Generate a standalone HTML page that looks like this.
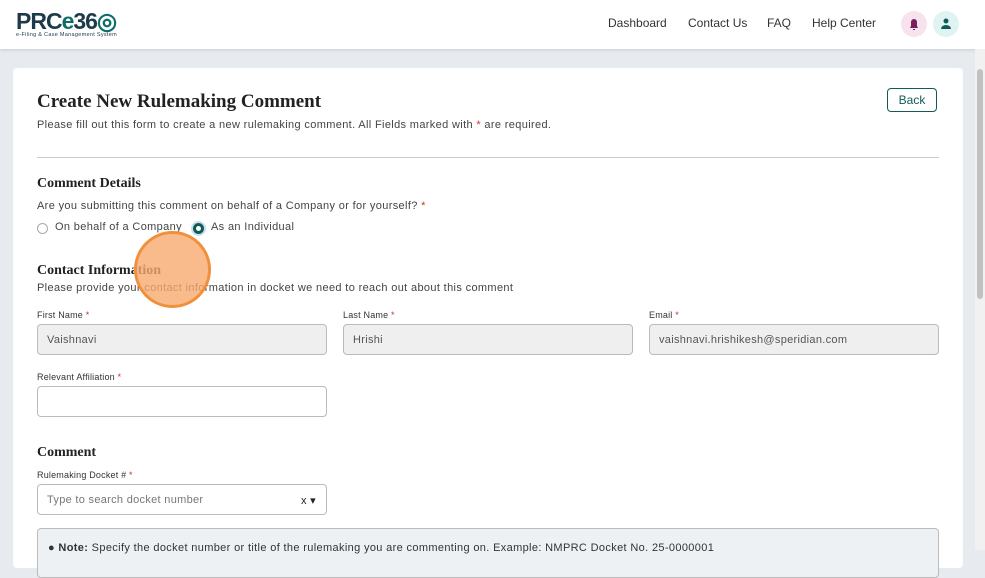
<!DOCTYPE html>
<html><head><style>
*{box-sizing:border-box;margin:0;padding:0}
body{width:985px;height:550px;overflow:hidden;background:#e7eaee;font-family:"Liberation Sans",sans-serif;color:#333;position:relative}
.hdr{position:absolute;left:0;top:0;width:985px;height:49px;background:#fff;box-shadow:0 1px 3px rgba(0,0,0,.12)}
.logo{position:absolute;left:16px;top:8px;font-weight:bold;font-size:23px;color:#1d3a4a;letter-spacing:-1px}
.logo .e{color:#0f6e6a}
.sub{position:absolute;left:16px;top:32px;font-size:5.5px;color:#1d3a4a;letter-spacing:.3px}
.nav{position:absolute;top:16px;font-size:12px;color:#333}
.ic{position:absolute;top:11px;width:26px;height:26px;border-radius:50%}
.card{position:absolute;left:13px;top:68px;width:950px;height:500px;background:#fff;border-radius:4px}
.sb{position:absolute;left:975px;top:49px;width:10px;height:501px;background:#f1f1f1}
.sb div{position:absolute;left:2px;top:20px;width:6px;height:230px;background:#c1c1c1;border-radius:3px}
.serif{font-family:"Liberation Serif",serif;font-weight:bold;color:#222;position:absolute}
.t{position:absolute;font-size:11px;color:#444;white-space:nowrap;letter-spacing:.35px}
.lbl{position:absolute;font-size:9px;color:#333;letter-spacing:.2px}
.r{color:#c0392b}
.inp{position:absolute;height:31px;border:1px solid #bbb;border-radius:4px;font-size:11px;color:#555;padding:9px 9px;letter-spacing:.3px}
.g{background:#efefef}
</style></head><body>
<div class="hdr">
<div class="logo">PRC<span class="e">e</span>36<span class="e">◎</span></div>
<div class="sub">e-Filing &amp; Case Management System</div>
<div class="nav" style="left:608px">Dashboard</div>
<div class="nav" style="left:688px">Contact Us</div>
<div class="nav" style="left:767px">FAQ</div>
<div class="nav" style="left:812px">Help Center</div>
<div class="ic" style="left:901px;background:#f6e3ee"><svg width="26" height="26"><path d="M9 17h8l-1-2v-4a3 3 0 0 0-6 0v4z M12 18h2v1h-2z" fill="#7a1f5e"/></svg></div>
<div class="ic" style="left:933px;background:#dff3f3"><svg width="26" height="26"><circle cx="13" cy="10" r="2.5" fill="#0f5c57"/><path d="M8 18a5 4 0 0 1 10 0z" fill="#0f5c57"/></svg></div>
</div>
<div class="card">
<div class="serif" style="left:24px;top:23px;font-size:19px">Create New Rulemaking Comment</div>
<div class="t" style="left:24px;top:51px">Please fill out this form to create a new rulemaking comment. All Fields marked with <span class="r">*</span> are required.</div>
<div style="position:absolute;left:874px;top:20px;width:50px;height:24px;border:1px solid #0f5c57;border-radius:4px;font-size:12px;color:#0f5c57;text-align:center;line-height:22px">Back</div>
<div style="position:absolute;left:24px;top:89px;width:902px;height:1px;background:#ccc"></div>
<div class="serif" style="left:24px;top:108px;font-size:14px">Comment Details</div>
<div class="t" style="left:24px;top:132px">Are you submitting this comment on behalf of a Company or for yourself? <span class="r">*</span></div>
<div style="position:absolute;left:24px;top:155px;width:11px;height:11px;border:1px solid #aaa;border-radius:50%"></div>
<div class="t" style="left:42px;top:153px">On behalf of a Company</div>
<div style="position:absolute;left:180px;top:155px;width:11px;height:11px;border:3px solid #0f5c57;border-radius:50%;box-shadow:0 0 0 2px #cde"></div>
<div class="t" style="left:198px;top:153px">As an Individual</div>
<div class="serif" style="left:24px;top:195px;font-size:14px">Contact Information</div>
<div class="t" style="left:24px;top:214px">Please provide your contact information in docket we need to reach out about this comment</div>
<div class="lbl" style="left:24px;top:242px">First Name <span class="r">*</span></div>
<div class="lbl" style="left:330px;top:242px">Last Name <span class="r">*</span></div>
<div class="lbl" style="left:636px;top:242px">Email <span class="r">*</span></div>
<div class="inp g" style="left:24px;top:256px;width:290px">Vaishnavi</div>
<div class="inp g" style="left:330px;top:256px;width:290px">Hrishi</div>
<div class="inp g" style="left:636px;top:256px;width:290px">vaishnavi.hrishikesh@speridian.com</div>
<div class="lbl" style="left:24px;top:304px">Relevant Affiliation <span class="r">*</span></div>
<div class="inp" style="left:24px;top:318px;width:290px"></div>
<div class="serif" style="left:24px;top:377px;font-size:14px">Comment</div>
<div class="lbl" style="left:24px;top:402px">Rulemaking Docket # <span class="r">*</span></div>
<div class="inp" style="left:24px;top:416px;width:290px;color:#777">Type to search docket number<span style="position:absolute;right:10px;color:#222">x ▾</span></div>
<div style="position:absolute;left:24px;top:460px;width:902px;height:50px;background:#eef1f3;border:1px solid #bbb;border-radius:4px"><div class="t" style="left:10px;top:13px;color:#333"><b>● Note:</b> Specify the docket number or title of the rulemaking you are commenting on. Example: NMPRC Docket No. 25-0000001</div></div>
</div>
<div class="sb"><div></div></div>
<div style="position:absolute;left:134px;top:231px;width:77px;height:77px;border-radius:50%;background:rgba(248,170,110,.8);border:3px solid #f0903a"></div>
</body></html>
